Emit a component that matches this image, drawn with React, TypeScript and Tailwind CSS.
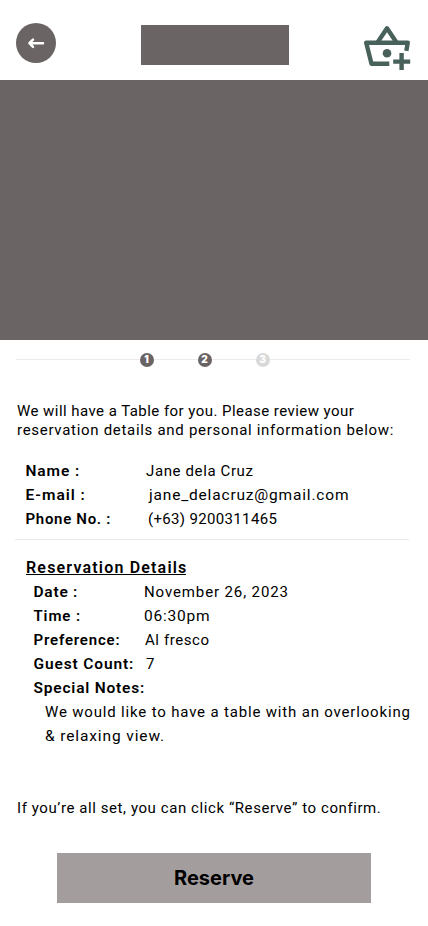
import type { ReactNode } from "react";

function Line({ className = "", children }: { className?: string; children: ReactNode }) {
  return <span className={`block whitespace-nowrap ${className}`}>{children}</span>;
}

function Row({
  label,
  value,
  labelClass,
  valueClass = "",
}: {
  label: string;
  value?: string;
  labelClass: string;
  valueClass?: string;
}) {
  return (
    <div className="flex h-6 leading-6">
      <dt className={`shrink-0 whitespace-nowrap font-semibold ${labelClass}`}>{label}</dt>
      {value && <dd className={`whitespace-nowrap ${valueClass}`}>{value}</dd>}
    </div>
  );
}

function Step({ n, active = false }: { n: number; active?: boolean }) {
  return (
    <span
      className={`flex h-3.5 w-3.5 items-center justify-center rounded-full pr-px pb-0.5 font-[Inter] text-[10px] leading-none font-black text-white ${
        active ? "bg-[#6b6464]" : "bg-[#d9d9d9]"
      }`}
    >
      {n}
    </span>
  );
}

function BasketPlus() {
  return (
    <svg width="48" height="46" viewBox="363 25 48 46" fill="none" stroke="#48615a" strokeWidth="4.4" strokeLinejoin="round">
      <path d="M377.500 42.500 387 28.300l9.500 14.200" />
      <path d="M406.300 50.800l1.500-8.100H366.200l5.300 21.100h17.800" />
      <circle cx="387" cy="53.200" r="4.300" fill="#48615a" stroke="none" />
      <path d="M401.600 53v17M393.200 61.600h17" />
    </svg>
  );
}

export default function App() {
  return (
    <main className="flex h-[926px] w-[428px] flex-col overflow-hidden bg-white font-[Roboto,sans-serif] text-[15px] text-black">
      <header className="flex h-20 shrink-0 items-start pl-4">
        <button aria-label="Back" className="mt-[23px] flex h-10 w-10 items-center justify-center rounded-full bg-[#6b6464]">
          <svg width="18" height="12" viewBox="0 0 18 12" fill="none" stroke="white" strokeWidth="2.5" strokeLinecap="round" strokeLinejoin="round">
            <path d="M16 6.200H3M6 2.600 2.400 6.200 6 9.800" />
          </svg>
        </button>
        <div className="mt-[25px] ml-[85px] h-10 w-[148px] bg-[#6b6464]" />
        <div className="mt-[25px] ml-[74px]">
          <BasketPlus />
        </div>
      </header>

      <div className="h-[260px] shrink-0 bg-[#6b6464]" />

      <nav className="mt-[13px] flex h-3.5 shrink-0 items-center pl-4 pr-[18px]">
        <span className="mb-px h-px w-[124px] bg-[#ebebeb]" />
        <Step n={1} active />
        <span className="mb-px h-px w-11 bg-[#ebebeb]" />
        <Step n={2} active />
        <span className="mb-px h-px w-11 bg-[#ebebeb]" />
        <Step n={3} />
        <span className="mb-px h-px flex-1 bg-[#ebebeb]" />
      </nav>

      <p className="mt-[35px] h-[38px] shrink-0 pl-[17px] leading-[19px]">
        <Line className="tracking-[0.45px]">We will have a Table for you. Please review your</Line>
        <Line className="tracking-[0.7px]">reservation details and personal information below:</Line>
      </p>

      <dl className="mt-[19px] shrink-0 pl-[25.500px]">
        <Row label="Name :" value="Jane dela Cruz" labelClass="w-[120.500px] text-[15.5px] tracking-[0.9px]" valueClass="tracking-[0.62px]" />
        <Row label="E-mail :" value="jane_delacruz@gmail.com" labelClass="w-[123.500px] text-[15.5px] tracking-[1px]" valueClass="text-[15.5px] tracking-[0.82px]" />
        <Row label="Phone No. :" value="(+63) 9200311465" labelClass="w-[122.500px] tracking-[0.7px]" valueClass="tracking-[0.34px]" />
      </dl>

      <hr className="ml-[15px] mt-2 h-px w-[394px] shrink-0 border-0 bg-[#e8e8e8]" />

      <h2 className="mt-4 ml-[26px] h-6 w-[160px] shrink-0 overflow-hidden whitespace-nowrap text-base font-semibold leading-6 tracking-[1.18px] underline decoration-1 underline-offset-1">
        Reservation Details
      </h2>

      <dl className="shrink-0 pl-[33.500px]">
        <Row label="Date :" value="November 26, 2023" labelClass="w-[110.500px] text-[15.5px] tracking-[0.75px]" valueClass="tracking-[0.88px]" />
        <Row label="Time :" value="06:30pm" labelClass="w-[110.500px] tracking-[0.9px]" valueClass="text-[15.5px] tracking-[0.8px]" />
        <Row label="Preference:" value="Al fresco" labelClass="w-[111.500px] tracking-[0.82px]" valueClass="tracking-[0.58px]" />
        <Row label="Guest Count:" value="7" labelClass="w-[112.500px] text-[15.5px] tracking-[0.87px]" />
        <Row label="Special Notes:" labelClass="text-[15.5px] tracking-[0.8px]" />
      </dl>

      <p className="h-12 shrink-0 pl-[45px] leading-6">
        <Line className="tracking-[0.825px]">We would like to have a table with an overlooking</Line>
        <Line className="text-[15.5px] tracking-[0.88px]">&amp; relaxing view.</Line>
      </p>

      <p className="mt-12 h-6 shrink-0 whitespace-nowrap pl-[17px] leading-6 tracking-[0.58px]">
        If you’re all set, you can click “Reserve” to confirm.
      </p>

      <button className="mt-[33px] ml-[57px] h-[50px] w-[314px] shrink-0 bg-[#a49d9d] font-[Inter] text-xl font-bold">
        Reserve
      </button>
    </main>
  );
}
